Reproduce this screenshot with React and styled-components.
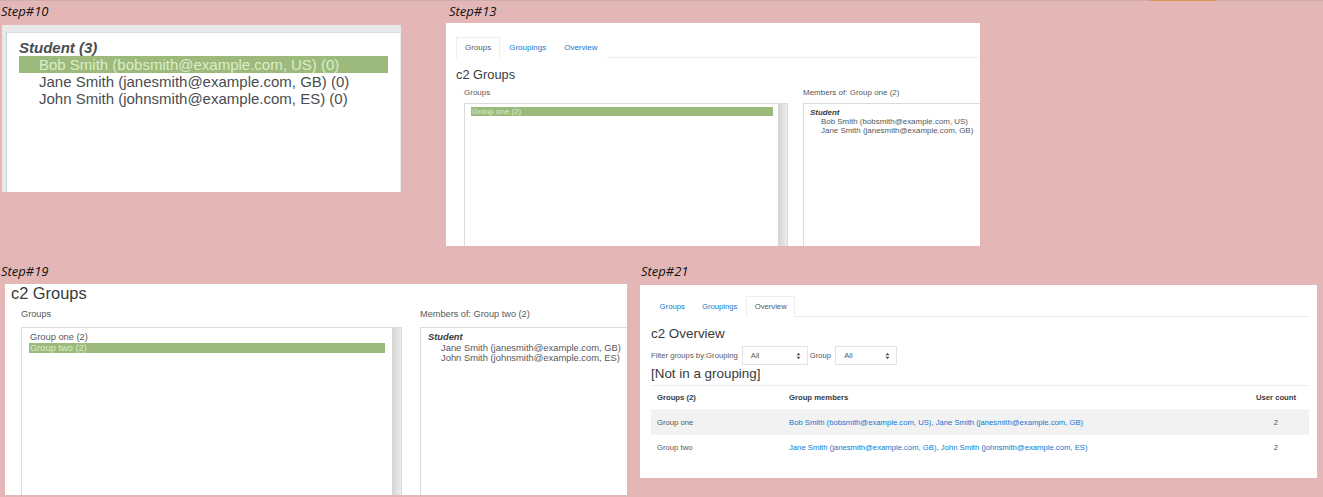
import React from 'react'
import styled, { createGlobalStyle } from 'styled-components'

const GlobalStyle = createGlobalStyle`
    html, body {
        margin: 0;
        padding: 0;
        background: #e4b6b6;
    }
    body {
        font-family: "Liberation Sans", Arial, sans-serif;
        color: #4a4d50;
    }
`

function Tabs({ active, size, pad }) {
    return (
        <TabBar>
            {['Groups', 'Groupings', 'Overview'].map(name => (
                <Tab key={name} $active={name === active} $size={size} $pad={pad}>{name}</Tab>
            ))}
        </TabBar>
    )
}

function GroupsEditor({ m, groups, selected, memberLabel, members }) {
    return (
        <Editor $m={m}>
            <EditorColumn $width={m.leftWidth}>
                <Label $m={m}>Groups</Label>
                <ListBox $gap={m.boxGap}>
                    <ListContent $m={m}>
                        {groups.map(group => (
                            <Option key={group} $selected={group === selected} $size={m.text} $line={m.line} $indent={m.optionIndent}>
                                {group}
                            </Option>
                        ))}
                    </ListContent>
                    <Scrollbar />
                </ListBox>
            </EditorColumn>
            <EditorColumn $grow>
                <Label $m={m}>{memberLabel}</Label>
                <MemberBox>
                    <MemberContent $m={m}>
                        <RoleName $size={m.text} $line={m.line}>Student</RoleName>
                        {members.map(member => (
                            <Member key={member} $size={m.memberText} $line={m.line} $indent={m.memberIndent}>{member}</Member>
                        ))}
                    </MemberContent>
                </MemberBox>
            </EditorColumn>
        </Editor>
    )
}

const smallEditor = {
    marginLeft: 8, leftWidth: 339, boxGap: 15, labelSize: 8, labelHeight: 15, labelLine: 9,
    text: 7.9, memberText: 7.95, line: 9, optionIndent: 1, memberIndent: 11,
    padTop: 3, padLeft: 6, padRight: 5, memberTop: 3.5, memberPad: 6,
}

const largeEditor = {
    marginLeft: 10, leftWidth: 399, boxGap: 18, labelSize: 9.2, labelHeight: 24, labelLine: 23,
    text: 9.3, memberText: 9.4, line: 10.5, optionIndent: 1, memberIndent: 13,
    padTop: 4, padLeft: 7, padRight: 7, memberTop: 4, memberPad: 7,
}

const App = () => {
    return (
        <Page>
            <GlobalStyle />
            <TopEdge><TopMark /></TopEdge>
            <TopRow>
                <Figure $width={400} $gap={46}>
                    <Caption $height={24} $line={21}>Step#10</Caption>
                    <ShotOne>
                        <ShotOneInner>
                            <BigRole>Student (3)</BigRole>
                            <BigMember $selected>Bob Smith (bobsmith@example.com, US) (0)</BigMember>
                            <BigMember>Jane Smith (janesmith@example.com, GB) (0)</BigMember>
                            <BigMember>John Smith (johnsmith@example.com, ES) (0)</BigMember>
                        </ShotOneInner>
                    </ShotOne>
                </Figure>
                <Figure $width={534}>
                    <Caption $height={22} $line={21} $indent={2}>Step#13</Caption>
                    <Panel $height={223} $left={0} $width={534} $pad="14px 0 0 10px">
                        <Tabs active="Groups" size={8} pad={8} />
                        <Heading $size={12.8} $top={4} $height={26}>c2 Groups</Heading>
                        <GroupsEditor
                            m={smallEditor}
                            groups={['Group one (2)']}
                            selected="Group one (2)"
                            memberLabel="Members of: Group one (2)"
                            members={['Bob Smith (bobsmith@example.com, US)', 'Jane Smith (janesmith@example.com, GB)']}
                        />
                    </Panel>
                </Figure>
            </TopRow>
            <BottomRow>
                <Figure $width={627} $gap={13}>
                    <Caption $height={21} $line={17}>Step#19</Caption>
                    <Panel $height={211} $left={5} $width={622} $pad="0 0 0 6px">
                        <Heading $size={16.4} $height={19}>c2 Groups</Heading>
                        <GroupsEditor
                            m={largeEditor}
                            groups={['Group one (2)', 'Group two (2)']}
                            selected="Group two (2)"
                            memberLabel="Members of: Group two (2)"
                            members={['Jane Smith (janesmith@example.com, GB)', 'John Smith (johnsmith@example.com, ES)']}
                        />
                    </Panel>
                </Figure>
                <Figure $width={677}>
                    <Caption $height={22} $line={17}>Step#21</Caption>
                    <Panel $height={193} $left={0} $width={677} $pad="11px 8px 0 11px">
                        <Tabs active="Overview" size={7.7} pad={7.6} />
                        <Heading $size={13.4} $top={4} $height={25}>c2 Overview</Heading>
                        <FilterRow>
                            <FilterLabel $right={4}>Filter groups by:Grouping</FilterLabel>
                            <SelectBox $width={66}>All<Carets /></SelectBox>
                            <FilterLabel $left={2} $right={4}>Group</FilterLabel>
                            <SelectBox $width={62}>All<Carets /></SelectBox>
                        </FilterRow>
                        <GroupingTitle>[Not in a grouping]</GroupingTitle>
                        <OverviewTable>
                            <thead>
                                <tr>
                                    <HeadCell $width={126}>Groups (2)</HeadCell>
                                    <HeadCell>Group members</HeadCell>
                                    <HeadCell $width={66} $center>User count</HeadCell>
                                </tr>
                            </thead>
                            <tbody>
                                <Row $shaded $height={26}>
                                    <Cell>Group one</Cell>
                                    <Cell>
                                        <MemberLink>Bob Smith (bobsmith@example.com, US)</MemberLink>, <MemberLink>Jane Smith (janesmith@example.com, GB)</MemberLink>
                                    </Cell>
                                    <Cell $center>2</Cell>
                                </Row>
                                <Row $height={24}>
                                    <Cell>Group two</Cell>
                                    <Cell>
                                        <MemberLink>Jane Smith (janesmith@example.com, GB)</MemberLink>, <MemberLink>John Smith (johnsmith@example.com, ES)</MemberLink>
                                    </Cell>
                                    <Cell $center>2</Cell>
                                </Row>
                            </tbody>
                        </OverviewTable>
                    </Panel>
                </Figure>
            </BottomRow>
        </Page>
    )
}

function Carets() {
    return (
        <CaretIcon viewBox="0 0 6 9" width="5" height="8">
            <path d="M3 0.5 L5.4 3.5 H0.6 Z M3 8.5 L0.6 5.5 H5.4 Z" fill="#55585b" />
        </CaretIcon>
    )
}

export default App

const Page = styled.div`
    width: 1323px;
    height: 497px;
    overflow: hidden;
    display: flex;
    flex-direction: column;
    background: #e4b6b6;
`
const TopEdge = styled.div`
    height: 1px;
    flex: none;
    background: #cfacac;
    padding-left: 1150px;
`
const TopMark = styled.div`
    width: 66px;
    height: 1px;
    background: #d9964f;
`
const TopRow = styled.div`
    display: flex;
    height: 262px;
    flex: none;
`
const BottomRow = styled.div`
    display: flex;
    flex: 1;
`
const Figure = styled.div`
    width: ${props => props.$width}px;
    margin-right: ${props => props.$gap || 0}px;
    flex: none;
    display: flex;
    flex-direction: column;
`
const Caption = styled.div`
    height: ${props => props.$height}px;
    padding-left: ${props => (props.$indent || 0) + 1}px;
    box-sizing: border-box;
    font-family: "Open Sans", sans-serif;
    font-style: italic;
    font-size: 13px;
    line-height: ${props => props.$line}px;
    color: #111;
`
const ShotOne = styled.div`
    margin-left: 2px;
    width: 399px;
    height: 167px;
    box-sizing: border-box;
    background: #e9e9e9;
    padding: 7px 0 0 4px;
    display: flex;
`
const ShotOneInner = styled.div`
    flex: 1;
    margin-right: 1px;
    background: #fff;
    border-left: 1px solid #c5d2d2;
    border-top: 1px solid #d5dcdc;
    padding: 6px 12px 0 12px;
`
const BigRole = styled.div`
    font-size: 15px;
    font-weight: bold;
    font-style: italic;
    line-height: 17px;
    color: #4a4d50;
`
const BigMember = styled.div`
    font-size: 15px;
    line-height: 17px;
    padding-left: 20px;
    white-space: nowrap;
    color: ${props => props.$selected ? '#dcedc8' : '#4a4d50'};
    background: ${props => props.$selected ? '#9cba7c' : 'transparent'};
`
const Panel = styled.div`
    margin-left: ${props => props.$left}px;
    width: ${props => props.$width}px;
    height: ${props => props.$height}px;
    box-sizing: border-box;
    padding: ${props => props.$pad};
    background: #fff;
    overflow: hidden;
    display: flex;
    flex-direction: column;
`
const TabBar = styled.div`
    display: flex;
    height: 21px;
    flex: none;
    box-sizing: border-box;
    border-bottom: 1px solid #eceeef;
`
const Tab = styled.div`
    height: 21px;
    box-sizing: border-box;
    padding: 0 ${props => props.$pad}px;
    font-size: ${props => props.$size}px;
    line-height: 20px;
    color: ${props => props.$active ? '#55595c' : '#1177d1'};
    background: #fff;
    border: 1px solid ${props => props.$active ? '#eceeef' : 'transparent'};
    border-bottom: 0;
`
const Heading = styled.div`
    font-size: ${props => props.$size}px;
    margin-top: ${props => props.$top || 0}px;
    height: ${props => props.$height}px;
    line-height: ${props => props.$height}px;
    color: #373a3c;
    flex: none;
`
const Editor = styled.div`
    display: flex;
    flex: 1;
    min-height: 0;
    margin-left: ${props => props.$m.marginLeft}px;
`
const EditorColumn = styled.div`
    display: flex;
    flex-direction: column;
    width: ${props => props.$width ? `${props.$width}px` : 'auto'};
    flex: ${props => props.$grow ? 1 : 'none'};
    min-width: 0;
`
const Label = styled.div`
    font-size: ${props => props.$m.labelSize}px;
    height: ${props => props.$m.labelHeight}px;
    line-height: ${props => props.$m.labelLine}px;
    color: #55595c;
    white-space: nowrap;
    flex: none;
`
const ListBox = styled.div`
    flex: 1;
    width: calc(100% - ${props => props.$gap}px);
    box-sizing: border-box;
    border: 1px solid #dcdcdc;
    border-bottom: 0;
    display: flex;
`
const ListContent = styled.div`
    flex: 1;
    padding: ${props => props.$m.padTop}px ${props => props.$m.padRight}px 0 ${props => props.$m.padLeft}px;
`
const Scrollbar = styled.div`
    width: 9px;
    flex: none;
    background: linear-gradient(to right, #d4d4d4, #ececec);
`
const Option = styled.div`
    font-size: ${props => props.$size}px;
    line-height: ${props => props.$line}px;
    padding-left: ${props => props.$indent}px;
    color: ${props => props.$selected ? '#dcedc8' : '#55595c'};
    background: ${props => props.$selected ? '#9cba7c' : 'transparent'};
`
const MemberBox = styled.div`
    flex: 1;
    box-sizing: border-box;
    border: 1px solid #dcdcdc;
    border-right: 0;
    border-bottom: 0;
    overflow: hidden;
`
const MemberContent = styled.div`
    padding: ${props => props.$m.memberTop}px 0 0 ${props => props.$m.memberPad}px;
`
const RoleName = styled.div`
    font-size: ${props => props.$size}px;
    line-height: ${props => props.$line}px;
    font-weight: bold;
    font-style: italic;
    color: #373a3c;
`
const Member = styled.div`
    font-size: ${props => props.$size}px;
    line-height: ${props => props.$line}px;
    padding-left: ${props => props.$indent}px;
    white-space: nowrap;
    color: #55595c;
`
const FilterRow = styled.div`
    display: flex;
    align-items: center;
    height: 19px;
    font-size: 7.7px;
    color: #55595c;
    flex: none;
`
const FilterLabel = styled.span`
    margin-left: ${props => props.$left || 0}px;
    margin-right: ${props => props.$right || 0}px;
`
const SelectBox = styled.div`
    width: ${props => props.$width}px;
    height: 19px;
    box-sizing: border-box;
    border: 1px solid #e4e4e4;
    padding: 0 6px 0 8px;
    display: flex;
    align-items: center;
    justify-content: space-between;
    font-size: 7.7px;
    color: #55595c;
`
const CaretIcon = styled.svg`
    flex: none;
`
const GroupingTitle = styled.div`
    font-size: 13.4px;
    line-height: 17px;
    height: 20px;
    color: #373a3c;
    flex: none;
`
const OverviewTable = styled.table`
    width: 658px;
    border-collapse: collapse;
    border-top: 1px solid #eceeef;
    table-layout: fixed;
    font-size: 7.7px;
`
const HeadCell = styled.th`
    width: ${props => props.$width ? `${props.$width}px` : 'auto'};
    height: 23px;
    padding: 0 0 0 ${props => props.$center ? 0 : 6}px;
    text-align: ${props => props.$center ? 'center' : 'left'};
    color: #373a3c;
    font-weight: bold;
`
const Row = styled.tr`
    height: ${props => props.$height}px;
    background: ${props => props.$shaded ? '#f2f2f2' : 'transparent'};
`
const Cell = styled.td`
    padding: 0 0 0 ${props => props.$center ? 0 : 6}px;
    text-align: ${props => props.$center ? 'center' : 'left'};
    color: #55595c;
    white-space: nowrap;
`
const MemberLink = styled.span`
    color: #1177d1;
`
